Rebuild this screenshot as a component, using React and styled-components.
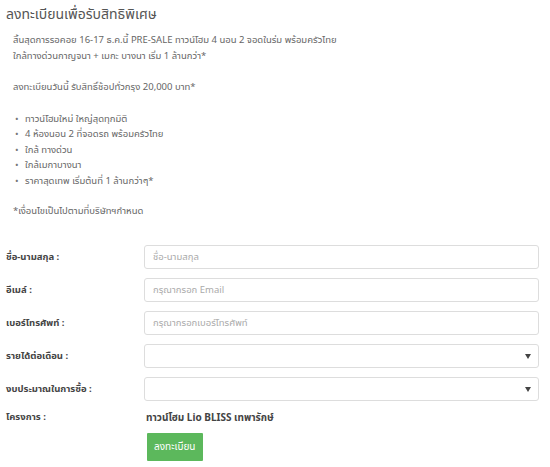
import React from "react";
import styled, { createGlobalStyle } from "styled-components";

const Global = createGlobalStyle`
  html, body { margin: 0; padding: 0; background: #fff; }
  body { font-family: "Noto Sans", "Noto Sans Thai", "Loma", "Garuda", sans-serif; }
  * { box-sizing: border-box; }
`;

const Page = styled.div`
  width: 550px;
  height: 467px;
  padding: 3px 11px 0 6px;
  color: #666;
  overflow: hidden;
`;

const Title = styled.h3`
  margin: 0 0 7px;
  font-size: 14px;
  font-weight: 400;
  line-height: 22px;
  color: #555;
`;

const Intro = styled.div`
  padding-left: 7px;
  font-size: 9.5px;
  line-height: 15.5px;
`;

const Para = styled.p`
  margin: 0 0 ${(p) => p.$gap ?? 16}px;
`;

const List = styled.ul`
  margin: 0 0 15px;
  padding: 0 0 0 12px;
  list-style: none;
`;

const Item = styled.li`
  position: relative;
  &::before {
    content: "•";
    position: absolute;
    left: -10px;
    color: #777;
  }
`;

const Form = styled.div`
  margin-top: 26px;
  display: flex;
  flex-direction: column;
  gap: 9px;
`;

const Row = styled.div`
  display: grid;
  grid-template-columns: 138px 1fr;
  align-items: center;
`;

const Label = styled.label`
  font-size: 9.5px;
  line-height: 14px;
  font-weight: 700;
  color: #444;
`;

const Input = styled.input`
  display: block;
  height: 24px;
  width: 100%;
  border: 1px solid #ddd;
  border-radius: 3px;
  padding: 0 8px;
  font-family: inherit;
  font-size: 9.5px;
  color: #555;
  outline: none;
  &::placeholder { color: #aaa; }
`;

const SelectBox = styled.div`
  height: 24px;
  border: 1px solid #ddd;
  border-radius: 3px;
  position: relative;
  background: #fff;
  &::after {
    content: "";
    position: absolute;
    right: 7px;
    top: 9px;
    border-left: 3px solid transparent;
    border-right: 3px solid transparent;
    border-top: 5px solid #444;
  }
`;

const Value = styled.div`
  font-size: 10px;
  line-height: 14px;
  font-weight: 700;
  color: #444;
  padding-left: 2px;
`;

const ButtonRow = styled.div`
  display: grid;
  grid-template-columns: 138px 1fr;
`;

const Button = styled.button`
  grid-column: 2;
  justify-self: start;
  margin-left: 3px;
  height: 28px;
  padding: 0 7px;
  background: #5cb85c;
  color: #fff;
  border: none;
  border-radius: 1px;
  font-family: inherit;
  font-size: 10px;
`;

export default function App() {
  return (
    <>
      <Global />
      <Page>
        <Title>ลงทะเบียนเพื่อรับสิทธิพิเศษ</Title>
        <Intro>
          <Para $gap={0}>สิ้นสุดการรอคอย 16-17 ธ.ค.นี้ PRE-SALE ทาวน์โฮม 4 นอน 2 จอดในร่ม พร้อมครัวไทย</Para>
          <Para>ใกล้ทางด่วนกาญจนา + เมกะ บางนา เริ่ม 1 ล้านกว่า*</Para>
          <Para>ลงทะเบียนวันนี้ รับสิทธิ์ช้อปทั่วกรุง 20,000 บาท*</Para>
          <List>
            <Item>ทาวน์โฮมใหม่ ใหญ่สุดทุกมิติ</Item>
            <Item>4 ห้องนอน 2 ที่จอดรถ พร้อมครัวไทย</Item>
            <Item>ใกล้ ทางด่วน</Item>
            <Item>ใกล้เมกาบางนา</Item>
            <Item>ราคาสุดเทพ เริ่มต้นที่ 1 ล้านกว่าๆ*</Item>
          </List>
          <Para $gap={0}>*เงื่อนไขเป็นไปตามที่บริษัทฯกำหนด</Para>
        </Intro>
        <Form>
          <Row>
            <Label>ชื่อ-นามสกุล :</Label>
            <Input placeholder="ชื่อ-นามสกุล" />
          </Row>
          <Row>
            <Label>อีเมล์ :</Label>
            <Input placeholder="กรุณากรอก Email" />
          </Row>
          <Row>
            <Label>เบอร์โทรศัพท์ :</Label>
            <Input placeholder="กรุณากรอกเบอร์โทรศัพท์" />
          </Row>
          <Row>
            <Label>รายได้ต่อเดือน :</Label>
            <SelectBox />
          </Row>
          <Row>
            <Label>งบประมาณในการซื้อ :</Label>
            <SelectBox />
          </Row>
          <Row>
            <Label>โครงการ :</Label>
            <Value>ทาวน์โฮม Lio BLISS เทพารักษ์</Value>
          </Row>
          <ButtonRow>
            <Button>ลงทะเบียน</Button>
          </ButtonRow>
        </Form>
      </Page>
    </>
  );
}
